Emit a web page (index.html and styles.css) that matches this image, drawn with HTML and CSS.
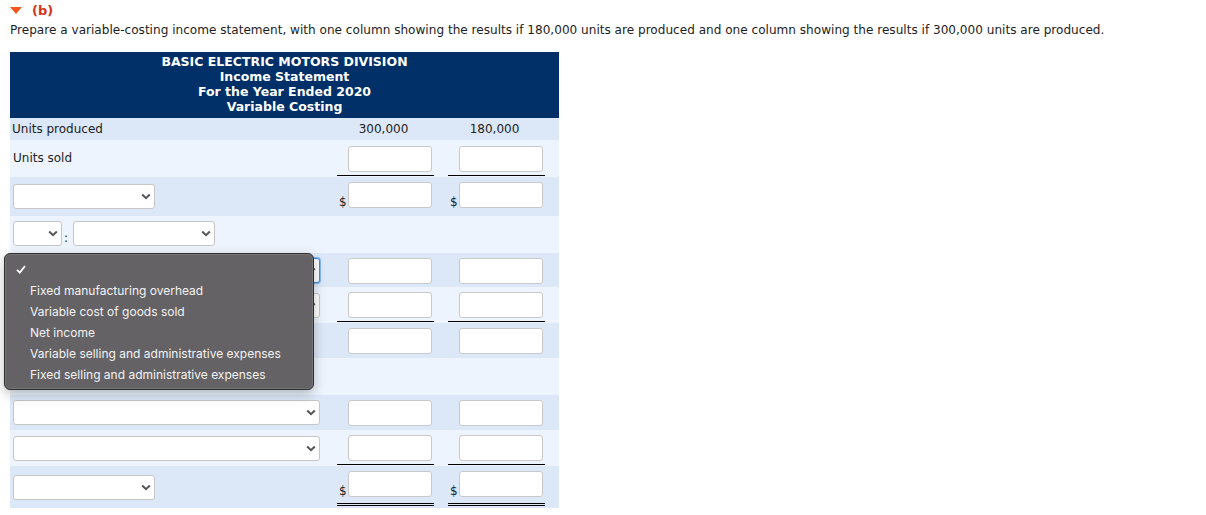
FILE: index.html
```html
<!DOCTYPE html>
<html>
<head>
<meta charset="utf-8">
<link rel="stylesheet" href="styles.css">
</head>
<body>
<div class="part">
  <div class="part-head"><span class="tri"></span><span class="part-label">(b)</span></div>
  <p class="prompt">Prepare a variable-costing income statement, with one column showing the results if 180,000 units are produced and one column showing the results if 300,000 units are produced.</p>

  <div class="statement">
    <div class="st-head">BASIC ELECTRIC MOTORS DIVISION<br>Income Statement<br>For the Year Ended 2020<br>Variable Costing</div>

    <div class="row dark h22">
      <div class="lbl">Units produced</div>
      <div class="val"><div class="box center">300,000</div></div>
      <div class="val"><div class="box center">180,000</div></div>
    </div>

    <div class="row light h37">
      <div class="lbl">Units sold</div>
      <div class="val pt6"><div class="box ul"><span class="cur"></span><span class="inp"></span></div></div>
      <div class="val pt6"><div class="box ul"><span class="cur"></span><span class="inp"></span></div></div>
    </div>

    <div class="row dark h39">
      <div class="lbl"><div class="sel w142"><svg width="10" height="7" viewBox="0 0 10 7"><path d="M1.2 1.5L5 5.2 8.8 1.5" fill="none" stroke="#555" stroke-width="2"/></svg></div></div>
      <div class="val"><div class="box"><span class="cur">$</span><span class="inp"></span></div></div>
      <div class="val"><div class="box"><span class="cur">$</span><span class="inp"></span></div></div>
    </div>

    <div class="row light h37">
      <div class="lbl pair">
        <div class="sel w49"><svg width="10" height="7" viewBox="0 0 10 7"><path d="M1.2 1.5L5 5.2 8.8 1.5" fill="none" stroke="#555" stroke-width="2"/></svg></div>
        <span class="colon">:</span>
        <div class="sel w142"><svg width="10" height="7" viewBox="0 0 10 7"><path d="M1.2 1.5L5 5.2 8.8 1.5" fill="none" stroke="#555" stroke-width="2"/></svg></div>
      </div>
      <div class="val"></div>
      <div class="val"></div>
    </div>

    <div class="row dark h34">
      <div class="lbl"><div class="sel w307 focus"><svg width="10" height="7" viewBox="0 0 10 7"><path d="M1.2 1.5L5 5.2 8.8 1.5" fill="none" stroke="#555" stroke-width="2"/></svg></div></div>
      <div class="val"><div class="box"><span class="cur"></span><span class="inp"></span></div></div>
      <div class="val"><div class="box"><span class="cur"></span><span class="inp"></span></div></div>
    </div>

    <div class="row light h36">
      <div class="lbl"><div class="sel w307"><svg width="10" height="7" viewBox="0 0 10 7"><path d="M1.2 1.5L5 5.2 8.8 1.5" fill="none" stroke="#555" stroke-width="2"/></svg></div></div>
      <div class="val"><div class="box ul"><span class="cur"></span><span class="inp"></span></div></div>
      <div class="val"><div class="box ul"><span class="cur"></span><span class="inp"></span></div></div>
    </div>

    <div class="row dark h35">
      <div class="lbl"><div class="sel w142"><svg width="10" height="7" viewBox="0 0 10 7"><path d="M1.2 1.5L5 5.2 8.8 1.5" fill="none" stroke="#555" stroke-width="2"/></svg></div></div>
      <div class="val"><div class="box"><span class="cur"></span><span class="inp"></span></div></div>
      <div class="val"><div class="box"><span class="cur"></span><span class="inp"></span></div></div>
    </div>

    <div class="row light h37">
      <div class="lbl"></div>
      <div class="val"></div>
      <div class="val"></div>
    </div>

    <div class="row dark h35">
      <div class="lbl"><div class="sel w307"><svg width="10" height="7" viewBox="0 0 10 7"><path d="M1.2 1.5L5 5.2 8.8 1.5" fill="none" stroke="#555" stroke-width="2"/></svg></div></div>
      <div class="val"><div class="box"><span class="cur"></span><span class="inp"></span></div></div>
      <div class="val"><div class="box"><span class="cur"></span><span class="inp"></span></div></div>
    </div>

    <div class="row light h36">
      <div class="lbl"><div class="sel w307"><svg width="10" height="7" viewBox="0 0 10 7"><path d="M1.2 1.5L5 5.2 8.8 1.5" fill="none" stroke="#555" stroke-width="2"/></svg></div></div>
      <div class="val"><div class="box ul"><span class="cur"></span><span class="inp"></span></div></div>
      <div class="val"><div class="box ul"><span class="cur"></span><span class="inp"></span></div></div>
    </div>

    <div class="row dark h42">
      <div class="lbl"><div class="sel w142"><svg width="10" height="7" viewBox="0 0 10 7"><path d="M1.2 1.5L5 5.2 8.8 1.5" fill="none" stroke="#555" stroke-width="2"/></svg></div></div>
      <div class="val"><div class="box dbl"><span class="cur">$</span><span class="inp"></span></div></div>
      <div class="val"><div class="box dbl"><span class="cur">$</span><span class="inp"></span></div></div>
    </div>
  </div>
</div>

<div class="menu">
  <div class="opt"><svg class="check" width="10" height="9" viewBox="0 0 10 9"><path d="M1 4.8L3.8 7.6 9 1" fill="none" stroke="#fff" stroke-width="1.8"/></svg></div>
  <div class="opt">Fixed manufacturing overhead</div>
  <div class="opt">Variable cost of goods sold</div>
  <div class="opt">Net income</div>
  <div class="opt">Variable selling and administrative expenses</div>
  <div class="opt">Fixed selling and administrative expenses</div>
</div>
</body>
</html>
```
FILE: styles.css
```css
html, body {
  margin: 0;
  padding: 0;
  background: #fff;
}
body {
  font-family: "DejaVu Sans", Verdana, sans-serif;
  color: #222;
}
.part {
  padding: 2px 0 0 10px;
}
.part-head {
  display: flex;
  align-items: center;
  gap: 10px;
  height: 16px;
}
.tri {
  width: 0;
  height: 0;
  border-left: 6px solid transparent;
  border-right: 6px solid transparent;
  border-top: 7px solid #f0561e;
}
.part-label {
  color: #d2331a;
  font-weight: bold;
  font-size: 13px;
}
.prompt {
  margin: 4px 0 0 0;
  font-size: 12.08px;
  line-height: 16px;
  color: #1d1d1d;
}
.statement {
  margin-top: 14px;
  width: 549px;
  font-size: 12px;
}
.st-head {
  background: #003067;
  color: #fff;
  font-weight: bold;
  font-size: 12.5px;
  text-align: center;
  line-height: 15px;
  padding: 2px 0 4px;
  height: 60px;
}
.row {
  display: flex;
  align-items: flex-start;
  box-sizing: border-box;
}
.dark { background: #dce8f7; }
.light { background: #edf4fd; }
.h22 { height: 22px; align-items: center; }
.h34 { height: 34px; }
.h35 { height: 35px; }
.h36 { height: 36px; }
.h37 { height: 37px; }
.h39 { height: 39px; }
.h42 { height: 42px; }
.lbl {
  flex: 0 0 324px;
  padding-left: 3px;
  align-self: center;
  display: flex;
  align-items: center;
}
.h22 .lbl { padding-left: 2px; }
.h37 .lbl { margin-top: -2px; }
.colon {
  width: 11px;
  text-align: left;
  padding-left: 2px;
  box-sizing: border-box;
  margin-top: 8px;
  line-height: 1;
}
.val {
  flex: 0 0 111px;
  box-sizing: border-box;
  padding: 5px 14px 0 0;
}
.h22 .val { padding-top: 0; }
.val.pt6 { padding-top: 6px; }
.box {
  width: 97px;
  display: flex;
  align-items: flex-end;
}
.box.center {
  justify-content: center;
  padding-right: 2px;
  box-sizing: border-box;
}
.box.ul {
  border-bottom: 1px solid #000;
  padding-bottom: 3px;
}
.box.dbl {
  border-bottom: 3px double #000;
  padding-bottom: 6px;
}
.cur {
  flex: 0 0 11px;
  padding-left: 2px;
  box-sizing: border-box;
  font-size: 12px;
  line-height: 11px;
}
.inp {
  display: block;
  width: 84px;
  height: 26px;
  box-sizing: border-box;
  background: #fff;
  border: 1px solid #c9c9c9;
  border-radius: 3px;
}
.sel {
  height: 25px;
  box-sizing: border-box;
  background: #fff;
  border: 1px solid #c6c6c6;
  border-radius: 3px;
  display: flex;
  align-items: center;
  justify-content: flex-end;
  padding-right: 3px;
}
.sel svg { display: block; }
.w142 { width: 142px; }
.w49 { width: 49px; }
.w307 { width: 307px; }
.sel.focus {
  border-color: #3b8ee3;
  box-shadow: 0 0 0 1px rgba(59, 142, 227, 0.55);
}
.menu {
  position: absolute;
  left: 4px;
  top: 253px;
  width: 310px;
  height: 137px;
  box-sizing: border-box;
  background: #646264;
  border: 1px solid #2f2f30;
  border-radius: 6px;
  box-shadow: inset 0 0 0 1px rgba(255, 255, 255, 0.12), 0 4px 12px rgba(0, 0, 0, 0.25);
  padding: 5px 0 6px 0;
  font-family: Inter, "Liberation Sans", Arial, sans-serif;
  font-size: 12px;
  color: #f3f3f3;
}
.opt {
  height: 21px;
  line-height: 21px;
  padding-left: 25px;
  position: relative;
}
.check {
  position: absolute;
  left: 11px;
  top: 6px;
}
```
